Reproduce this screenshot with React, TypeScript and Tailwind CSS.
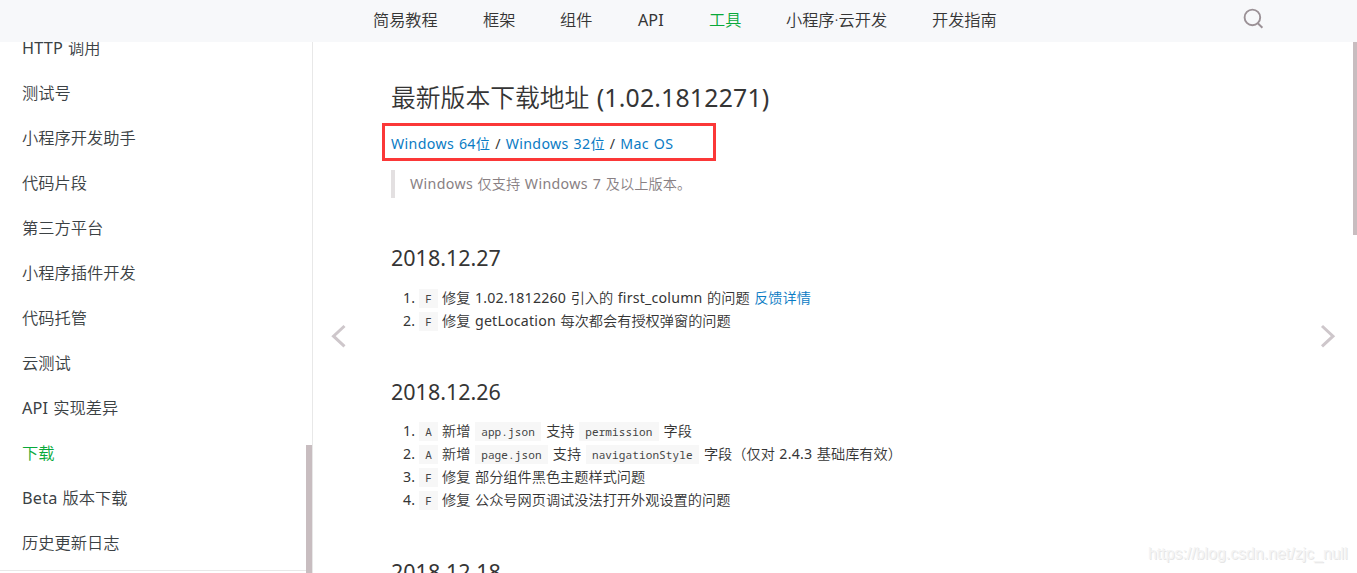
import React from 'react';

const navItems = [
  { label: '简易教程', width: 'w-[110px]' },
  { label: '框架', width: 'w-[77px]' },
  { label: '组件', width: 'w-[78px]' },
  { label: 'API', width: 'w-[71px]' },
  { label: '工具', width: 'w-[77px]', active: true },
  { label: '小程序·云开发', width: 'w-[146px]' },
  { label: '开发指南', width: 'w-[80px]' },
];

const sideItems = [
  { latin: 'HTTP', label: ' 调用' },
  { label: '测试号' },
  { label: '小程序开发助手' },
  { label: '代码片段' },
  { label: '第三方平台' },
  { label: '小程序插件开发' },
  { label: '代码托管' },
  { label: '云测试' },
  { latin: 'API', label: ' 实现差异' },
  { label: '下载', active: true },
  { latin: 'Beta', label: ' 版本下载' },
  { label: '历史更新日志' },
];

const Code: React.FC<{ children: React.ReactNode }> = ({ children }) => (
  <code className="mt-px mr-[5px] h-[19px] bg-[#f7f7f7] px-[6.2px] font-['Noto_Sans_Mono','DejaVu_Sans_Mono',monospace] text-[11px] leading-[19px] font-normal tracking-[0.12px] text-[#444]">
    {children}
  </code>
);

const Latin: React.FC<{ children: React.ReactNode }> = ({ children }) => (
  <span className="font-normal tracking-[0.2px]">{children}</span>
);

const Entry: React.FC<{ index: number; tag: string; children: React.ReactNode }> = ({ index, tag, children }) => (
  <li className="flex h-[23px] items-center whitespace-pre">
    <span className="w-7 pl-3 font-normal">{index}.</span>
    <Code>{tag}</Code>
    <span className="-ml-px" />
    {children}
  </li>
);

const App: React.FC = () => {
  return (
    <div className="flex h-[573px] w-[1357px] flex-col overflow-hidden bg-white font-['Noto_Sans','Noto_Sans_CJK_SC',sans-serif] font-[350] text-[#353535]">
      <header className="flex h-[42px] shrink-0 items-start bg-[#f7f8fa] pl-[373px]">
        <nav className="flex h-10 items-center text-[16.2px]">
          {navItems.map((item) => (
            <a
              key={item.label}
              className={`${item.width} whitespace-nowrap ${item.label === 'API' ? 'font-normal' : ''} ${item.active ? 'text-[#09a93a]' : ''}`}
            >
              {item.label}
            </a>
          ))}
        </nav>
        <svg className="mt-2 ml-[231px] h-[22px] w-[22px]" viewBox="0 0 22 22" fill="none" stroke="#9b9196" strokeWidth="1.9">
          <circle cx="9.4" cy="9.4" r="7.8" />
          <path d="M14.8 15.2 19.4 19.7" />
        </svg>
      </header>

      <div className="flex min-h-0 flex-1">
        <aside className="flex w-[313px] shrink-0 border-r border-[#e8e8e8]">
          <div className="w-[306px] overflow-hidden">
            <ul className="-mt-4 border-b border-[#e8e8e8] pb-1 pl-[22px] text-[16.25px] [word-spacing:0.8px] text-[#3b4144]">
              {sideItems.map((item) => (
                <li
                  key={item.label}
                  className={`flex h-[45px] items-center whitespace-pre ${item.active ? 'text-[#09a93a]' : ''}`}
                >
                  {item.latin && <Latin>{item.latin}</Latin>}
                  {item.label}
                </li>
              ))}
            </ul>
          </div>
          <div className="mt-[403px] w-1.5 bg-[#c8bdc0]" />
        </aside>

        <div className="flex w-[69px] shrink-0 items-start pt-[282px] pl-[18px]">
          <svg className="h-6 w-4" viewBox="0 0 16 24" fill="none" stroke="#cec7cb" strokeWidth="3">
            <path d="M13.5 2 2.5 12.2 13.5 22.4" />
          </svg>
        </div>

        <main className="w-[938px] overflow-hidden text-[14.2px] [word-spacing:0.8px]">
          <h1 className="mt-[37px] ml-[9px] h-9 text-[24.8px] leading-9 whitespace-pre">
            最新版本下载地址 <Latin>(1.02.1812271)</Latin>
          </h1>
          <div className="mt-2 flex h-[38px] w-[334px] items-center border-3 border-[#fb3838] pt-[3px] pl-1.5 font-normal tracking-[0.35px] whitespace-pre">
            <a className="text-[#0a7bc4]">Windows 64位</a>
            {' / '}
            <a className="text-[#0a7bc4]">Windows 32位</a>
            {' / '}
            <a className="text-[#0a7bc4]">Mac OS</a>
          </div>
          <blockquote className="mt-[9px] ml-[9px] h-7 border-l-4 border-[#e3e0e1] pl-[15px] leading-7 tracking-[0.05px] text-[#888083]">
            <span className="font-normal tracking-[0.35px]">Windows</span> 仅支持{' '}
            <span className="font-normal tracking-[0.35px]">Windows 7</span> 及以上版本。
          </blockquote>

          <h2 className="mt-11 ml-[9px] h-8 text-[21.5px] leading-8 font-normal">2018.12.27</h2>
          <ol className="mt-3 ml-[9px]">
            <Entry index={1} tag="F">
              {'修复 '}
              <Latin>1.02.1812260</Latin>
              {' 引入的 '}
              <Latin>first_column</Latin>
              {' 的问题 '}
              <a className="text-[#0a7bc4]">反馈详情</a>
            </Entry>
            <Entry index={2} tag="F">
              {'修复 '}
              <Latin>getLocation</Latin>
              {' 每次都会有授权弹窗的问题'}
            </Entry>
          </ol>

          <h2 className="mt-11 ml-[9px] h-8 text-[21.5px] leading-8 font-normal">2018.12.26</h2>
          <ol className="mt-[11px] ml-[9px]">
            <Entry index={1} tag="A">
              {'新增 '}
              <Code>app.json</Code>
              {'支持 '}
              <Code>permission</Code>
              {'字段'}
            </Entry>
            <Entry index={2} tag="A">
              {'新增 '}
              <Code>page.json</Code>
              {'支持 '}
              <Code>navigationStyle</Code>
              {'字段（仅对 '}
              <Latin>2.4.3</Latin>
              {' 基础库有效）'}
            </Entry>
            <Entry index={3} tag="F">修复 部分组件黑色主题样式问题</Entry>
            <Entry index={4} tag="F">修复 公众号网页调试没法打开外观设置的问题</Entry>
          </ol>

          <h2 className="mt-[45px] ml-[9px] h-8 text-[21.5px] leading-8 font-normal">2018.12.18</h2>
        </main>

        <div className="flex w-[33px] shrink-0 items-start pt-[282px]">
          <svg className="h-6 w-4" viewBox="0 0 16 24" fill="none" stroke="#cec7cb" strokeWidth="3">
            <path d="M2 2 13 12.2 2 22.4" />
          </svg>
        </div>
        <div className="h-[193px] w-1 shrink-0 bg-[#c8bdc0]" />
      </div>

      <p className="absolute top-[544px] left-[1148px] font-['Liberation_Sans',sans-serif] text-[15.9px] leading-5 font-normal whitespace-nowrap text-[#f4f4f4] [text-shadow:1px_1px_0_#e6e6e6]">
        https://blog.csdn.net/zjc_null
      </p>
    </div>
  );
};

export default App;
